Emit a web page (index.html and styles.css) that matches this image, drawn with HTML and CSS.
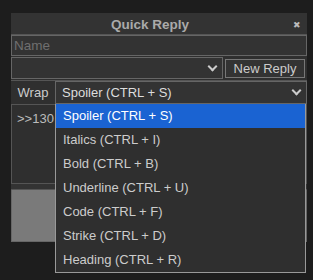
FILE: index.html
```html
<!DOCTYPE html>
<html lang="en">
<head>
    <meta charset="UTF-8">
    <meta name="viewport" content="width=device-width, initial-scale=1.0">
    <title>Quick Reply</title>
    <link rel="stylesheet" href="styles.css">
</head>
<body>
    <div class="qr">
        <div class="qr-head">
            <span class="qr-title">Quick Reply</span>
            <span class="qr-close">&#10006;</span>
        </div>
        <div class="qr-name">Name</div>
        <div class="qr-row">
            <div class="fake-select qr-thread"><span></span><span class="chev"></span></div>
            <button class="qr-btn">New Reply</button>
        </div>
        <div class="qr-row qr-wrap">
            <span class="wrap-label">Wrap</span>
            <div class="fake-select wrap-select"><span>Spoiler (CTRL + S)</span><span class="chev"></span></div>
        </div>
        <div class="qr-text">&gt;&gt;130</div>
        <div class="qr-gap"></div>
        <div class="qr-captcha"></div>

        <ul class="dropdown">
            <li class="active">Spoiler (CTRL + S)</li>
            <li>Italics (CTRL + I)</li>
            <li>Bold (CTRL + B)</li>
            <li>Underline (CTRL + U)</li>
            <li>Code (CTRL + F)</li>
            <li>Strike (CTRL + D)</li>
            <li>Heading (CTRL + R)</li>
        </ul>
    </div>
</body>
</html>
```

FILE: styles.css
```css
html, body {
    height: 100%;
}

body {
    margin: 0;
    padding: 13px 0 0 11px;
    box-sizing: border-box;
    min-height: 280px;
    background-color: #1d1d1d;
    font-family: "Liberation Sans", Arial, sans-serif;
    font-size: 13px;
    color: #ccc;
}

.qr {
    position: relative;
    width: 296px;
    background-color: #2f2f2f;
}

.qr-head {
    height: 21px;
    background-color: #333;
    border-bottom: 1px solid #555;
    display: flex;
    align-items: center;
    justify-content: center;
    padding-right: 18px;
    position: relative;
}

.qr-title {
    font-weight: bold;
    color: #aaa;
    font-size: 13.5px;
    padding-top: 2px;
}

.qr-close {
    position: absolute;
    right: 6px;
    top: 7px;
    font-size: 9px;
    color: #bbb;
}

.qr-name {
    height: 19px;
    border: 1px solid #666;
    background-color: #333;
    color: #6f6f6f;
    line-height: 19px;
    padding-left: 2px;
    font-size: 13.5px;
}

.qr-row {
    display: flex;
    align-items: center;
    margin-top: 1px;
}

.fake-select {
    display: flex;
    align-items: center;
    justify-content: space-between;
    border: 1px solid #666;
    background-color: #333;
    box-sizing: border-box;
}

.qr-thread {
    width: 212px;
    height: 22px;
}

.chev {
    width: 5px;
    height: 5px;
    border-right: 2px solid #ccc;
    border-bottom: 2px solid #ccc;
    transform: rotate(45deg);
    margin: 0 6px 4px 0;
}

.qr-btn {
    margin-left: 2px;
    width: 80px;
    height: 19px;
    padding: 0;
    border: 1px solid #777;
    background-color: #333;
    color: #ccc;
    font-family: inherit;
    font-size: 13px;
}

.qr-wrap {
    margin-top: 1px;
    border-top: 1px solid #555;
}

.wrap-label {
    width: 44px;
    text-align: center;
    color: #ccc;
}

.wrap-select {
    flex: 1;
    height: 23px;
    padding-left: 6px;
    color: #ddd;
}

.qr-text {
    height: 80px;
    border: 1px solid #555;
    box-sizing: border-box;
    padding: 6px 5px;
    color: #bbb;
}

.qr-gap {
    height: 5px;
    border-bottom: 1px solid #555;
    background-color: #333;
}

.qr-captcha {
    height: 51px;
    background-color: #7a7a7a;
    border: 1px solid #666;
    border-top: none;
}

.dropdown {
    position: absolute;
    left: 44px;
    top: 91px;
    width: 251px;
    margin: 0;
    padding: 0;
    list-style: none;
    background-color: #2f2f2f;
    border: 1px solid #999;
    border-top: none;
    box-sizing: border-box;
}

.dropdown li {
    height: 24px;
    line-height: 24px;
    padding-left: 7px;
    color: #ccc;
    font-size: 13px;
}

.dropdown li.active {
    background-color: #1a63d2;
    color: #fff;
}
```
